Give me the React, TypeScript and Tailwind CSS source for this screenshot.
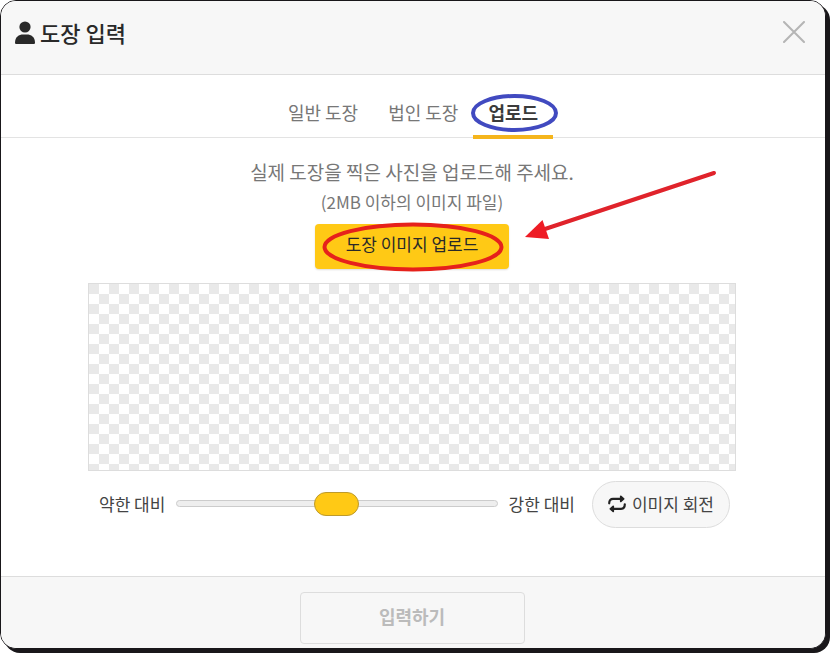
import { useState } from "react";

const tabs = ["일반 도장", "법인 도장", "업로드"];

function PersonIcon() {
  return (
    <svg viewBox="0 0 20 23" className="h-[23px] w-5" fill="#292929" aria-hidden="true">
      <circle cx="10" cy="6" r="5.6" />
      <path d="M0 21.800C0 15.800 4 13.500 8 13.500H12C16 13.500 20 15.800 20 21.800Q20 23 18.900 23H1.100Q0 23 0 21.800Z" />
    </svg>
  );
}

function RotateIcon() {
  return (
    <svg viewBox="0 0 18 18" className="h-[18px] w-[18px]" fill="none" stroke="#222" strokeWidth="2.2" strokeLinecap="round" strokeLinejoin="round" aria-hidden="true">
      <path d="M1.200 8.300C1.200 5.300 2.700 3.800 5 3.800H13" />
      <path d="M12.800 1.300L15.600 3.800L12.800 6.300Z" fill="#222" strokeWidth="1.800" />
      <path d="M16.800 9.300C16.800 12.300 15.300 13.800 13 13.800H5" />
      <path d="M5.200 11.300L2.400 13.800L5.200 16.300Z" fill="#222" strokeWidth="1.800" />
    </svg>
  );
}

export default function App() {
  const [active, setActive] = useState(2);
  const [contrast, setContrast] = useState(50);

  return (
    <div className="pr-1 pb-1 font-['Noto_Sans_CJK_KR',sans-serif] text-[#333]">
      <main className="overflow-hidden rounded-[16px] border border-[#19171a] bg-white shadow-[4px_4px_0_#19171a]">
        <header className="flex items-start justify-between border-b border-[#ddd] bg-[#f7f7f7] px-[14px] pt-[15px] pb-[25px]">
          <h1 className="flex items-center gap-[5px] text-[22px] leading-[33px] font-medium text-[#292929]">
            <PersonIcon />
            도장 입력
          </h1>
          <button type="button" aria-label="닫기" className="mt-[5px] mr-[6px]">
            <svg viewBox="0 0 22 22" className="h-[22px] w-[22px]" stroke="#b5b5b5" strokeWidth="2" strokeLinecap="round" aria-hidden="true">
              <path d="M1 1L21 21M21 1L1 21" />
            </svg>
          </button>
        </header>

        <nav className="flex h-[63px] items-end justify-center border-b border-[#e3e3e3]" aria-label="도장 종류">
          {tabs.map((tab, i) => (
            <button
              key={tab}
              type="button"
              onClick={() => setActive(i)}
              className={
                "relative -mb-[2px] h-12 border-b-4 px-[15px] pb-[2px] text-[18px] leading-7 whitespace-nowrap " +
                (i === active ? "border-[#f5b51c] font-bold text-[#3b3b3b]" : "border-transparent font-normal text-[#777]")
              }
            >
              {tab}
              {i === 2 && (
                <svg viewBox="0 0 88 40" className="pointer-events-none absolute top-[2px] -left-[2px] h-10 w-[88px]" fill="none" aria-hidden="true">
                  <ellipse cx="43.500" cy="20" rx="41.500" ry="17" stroke="#414ac0" strokeWidth="4" />
                </svg>
              )}
            </button>
          ))}
        </nav>

        <div className="pr-[2px]">
          <section className="mx-auto flex max-w-[648px] flex-col items-center pt-5 pb-12">
            <p className="text-[19px] leading-7 text-[#777]">실제 도장을 찍은 사진을 업로드해 주세요.</p>
            <p className="mt-[2px] text-[17px] leading-7 text-[#777]">(2MB 이하의 이미지 파일)</p>
            <div className="relative mt-2">
              <button type="button" className="h-[45px] w-[194px] rounded-[4px] bg-[#ffc915] pb-[5px] text-[17px] text-[#292929] shadow-[0_1px_2px_#ddd]">
                도장 이미지 업로드
              </button>
              <svg viewBox="0 0 402 102" className="pointer-events-none absolute -top-[54px] left-0 h-[102px] w-[402px]" fill="none" aria-hidden="true">
                <ellipse cx="98" cy="77" rx="88.500" ry="22.500" stroke="#e6211b" strokeWidth="4" />
                <path d="M399 3L230 59" stroke="#e0232b" strokeWidth="4" strokeLinecap="round" />
                <path d="M210 67L227.500 50L234 69Z" fill="#ee1c25" />
              </svg>
            </div>

            <div className="mt-[14px] h-[188px] w-full border border-[#ddd] bg-[conic-gradient(#fff_25%,#e9e9e9_0_50%,#fff_0_75%,#e9e9e9_0)] bg-size-[20px_20px]" />

            <div className="mt-[10px] flex w-full items-center pr-[6px] pl-[11px] text-[17px] text-[#444]">
              <label htmlFor="contrast" className="pb-[2px] whitespace-nowrap">약한 대비</label>
              <input
                id="contrast"
                type="range"
                min={0}
                max={100}
                value={contrast}
                onChange={(e) => setContrast(Number(e.target.value))}
                className="mx-[11px] mb-[2px] h-[7px] min-w-0 flex-1 appearance-none rounded-full border border-[#ccc] bg-[#eee] [&::-webkit-slider-thumb]:h-6 [&::-webkit-slider-thumb]:w-[45px] [&::-webkit-slider-thumb]:appearance-none [&::-webkit-slider-thumb]:rounded-full [&::-webkit-slider-thumb]:border [&::-webkit-slider-thumb]:border-[#bd9a2c] [&::-webkit-slider-thumb]:bg-[#ffc915]"
              />
              <span className="pb-[2px] whitespace-nowrap">강한 대비</span>
              <button type="button" className="ml-[17px] flex h-[47px] items-center gap-[6px] rounded-full border border-[#ddd] bg-[#f7f7f7] px-[15px] pb-[2px] whitespace-nowrap">
                <RotateIcon />
                이미지 회전
              </button>
            </div>
          </section>
        </div>

        <footer className="flex justify-center border-t border-[#ddd] bg-[#f7f7f7] pt-[15px] pr-[2px] pb-1">
          <button type="button" disabled className="h-[52px] w-[225px] rounded-[4px] border border-[#ddd] pb-[3px] text-[18px] font-bold text-[#bbb]">
            입력하기
          </button>
        </footer>
      </main>
    </div>
  );
}
